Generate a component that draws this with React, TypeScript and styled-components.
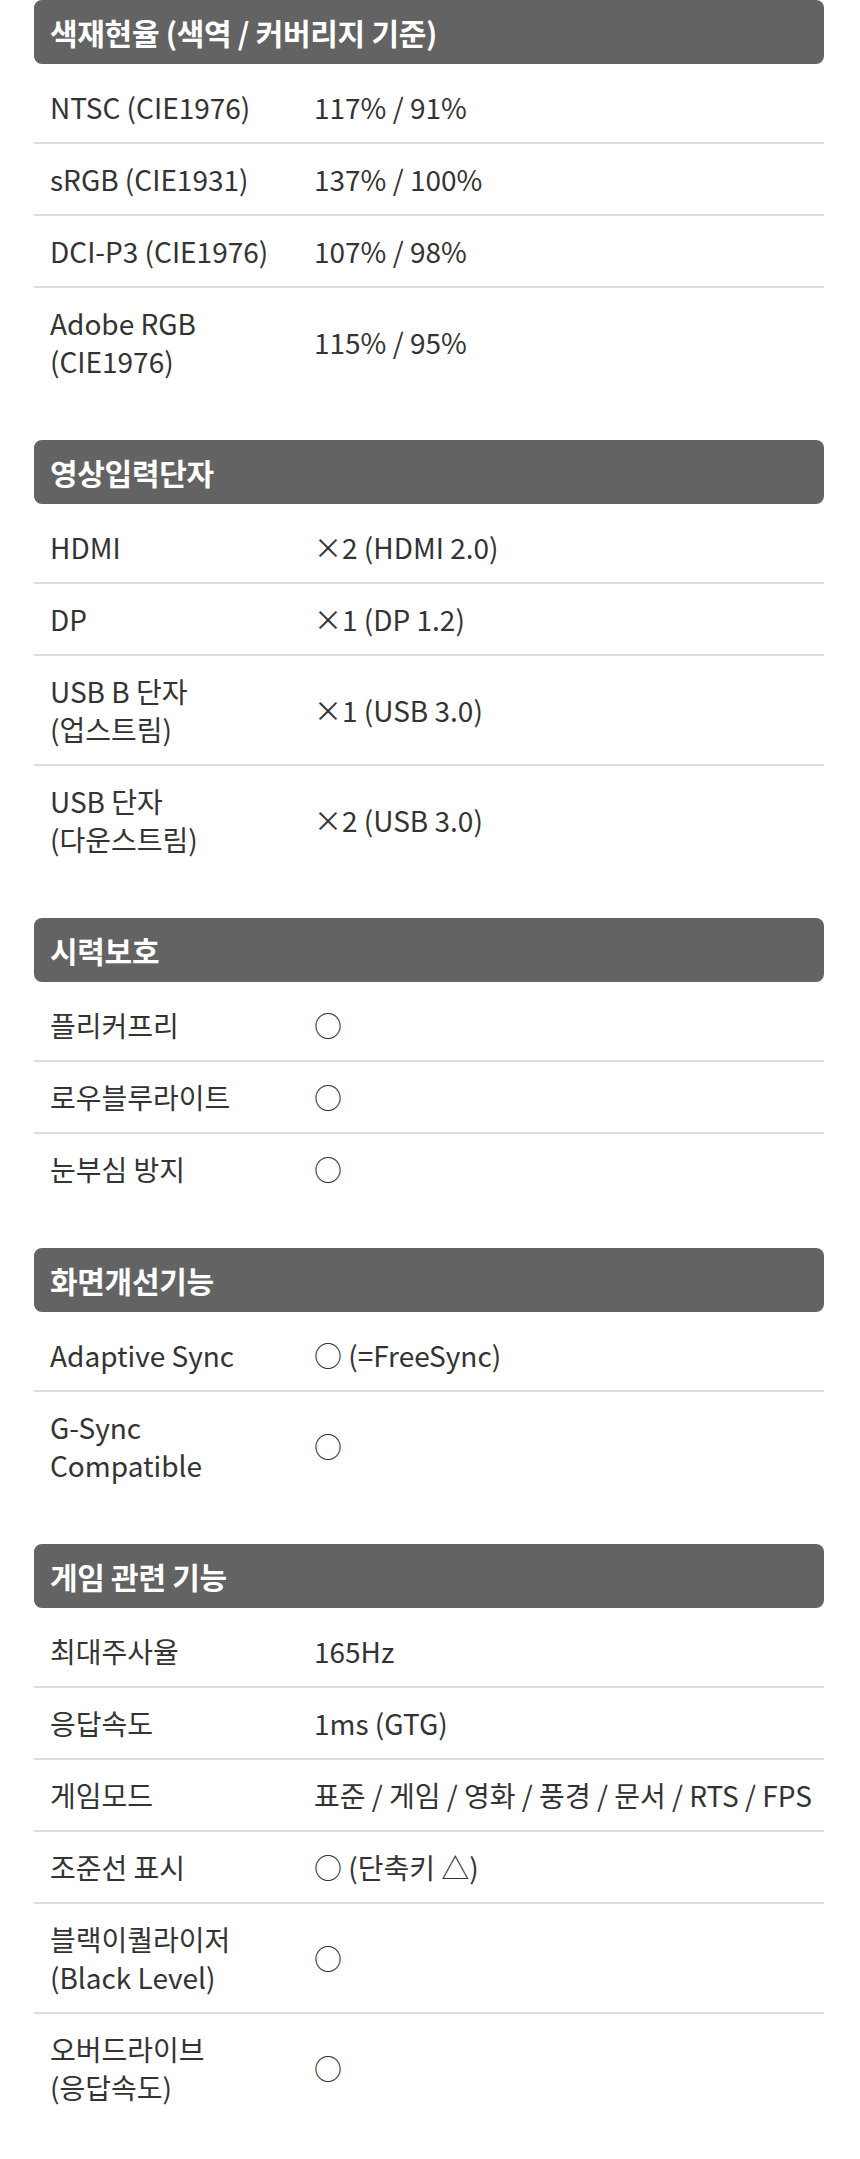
import React from "react";
import styled, { createGlobalStyle } from "styled-components";

const GlobalStyle = createGlobalStyle`
  html, body {
    margin: 0;
    padding: 0;
    background: #ffffff;
  }
  body {
    font-family: "Noto Sans CJK KR", "Noto Sans", sans-serif;
    color: #333333;
  }
`;

const Page = styled.div`
  width: 790px;
  margin: 0 auto 0 34px;
  padding-bottom: 42px;
`;

const Section = styled.section`
  margin-bottom: 44px;
  &:last-child {
    margin-bottom: 0;
  }
`;

const SectionTitle = styled.h2`
  display: flex;
  align-items: center;
  height: 64px;
  margin: 0;
  padding: 0 16px;
  background: #636363;
  border-radius: 8px;
  color: #ffffff;
  font-size: 30px;
  font-weight: 700;
  letter-spacing: -0.3px;
`;

const Table = styled.div`
  margin-top: 8px;
`;

const Row = styled.div`
  display: grid;
  grid-template-columns: 280px 1fr;
  align-items: center;
  padding: 16px 0;
  border-bottom: 2px solid #dddddd;
  font-size: 28px;
  line-height: 38px;
  word-break: keep-all;
  &:last-child {
    border-bottom: none;
  }
`;

const Label = styled.div`
  padding: 0 20px 0 16px;
`;

const Value = styled.div`
  white-space: nowrap;
`;

type SpecRow = [string, string];

const sections: { title: string; rows: SpecRow[] }[] = [
  {
    title: "색재현율 (색역 / 커버리지 기준)",
    rows: [
      ["NTSC (CIE1976)", "117% / 91%"],
      ["sRGB (CIE1931)", "137% / 100%"],
      ["DCI-P3 (CIE1976)", "107% / 98%"],
      ["Adobe RGB (CIE1976)", "115% / 95%"],
    ],
  },
  {
    title: "영상입력단자",
    rows: [
      ["HDMI", "×2 (HDMI 2.0)"],
      ["DP", "×1 (DP 1.2)"],
      ["USB B 단자 (업스트림)", "×1 (USB 3.0)"],
      ["USB 단자 (다운스트림)", "×2 (USB 3.0)"],
    ],
  },
  {
    title: "시력보호",
    rows: [
      ["플리커프리", "○"],
      ["로우블루라이트", "○"],
      ["눈부심 방지", "○"],
    ],
  },
  {
    title: "화면개선기능",
    rows: [
      ["Adaptive Sync", "○ (=FreeSync)"],
      ["G-Sync Compatible", "○"],
    ],
  },
  {
    title: "게임 관련 기능",
    rows: [
      ["최대주사율", "165Hz"],
      ["응답속도", "1ms (GTG)"],
      ["게임모드", "표준 / 게임 / 영화 / 풍경 / 문서 / RTS / FPS"],
      ["조준선 표시", "○ (단축키 △)"],
      ["블랙이퀄라이저 (Black Level)", "○"],
      ["오버드라이브 (응답속도)", "○"],
    ],
  },
];

export default function App() {
  return (
    <>
      <GlobalStyle />
      <Page>
        {sections.map((s) => (
          <Section key={s.title}>
            <SectionTitle>{s.title}</SectionTitle>
            <Table>
              {s.rows.map(([label, value]) => (
                <Row key={label}>
                  <Label>{label}</Label>
                  <Value>{value}</Value>
                </Row>
              ))}
            </Table>
          </Section>
        ))}
      </Page>
    </>
  );
}
